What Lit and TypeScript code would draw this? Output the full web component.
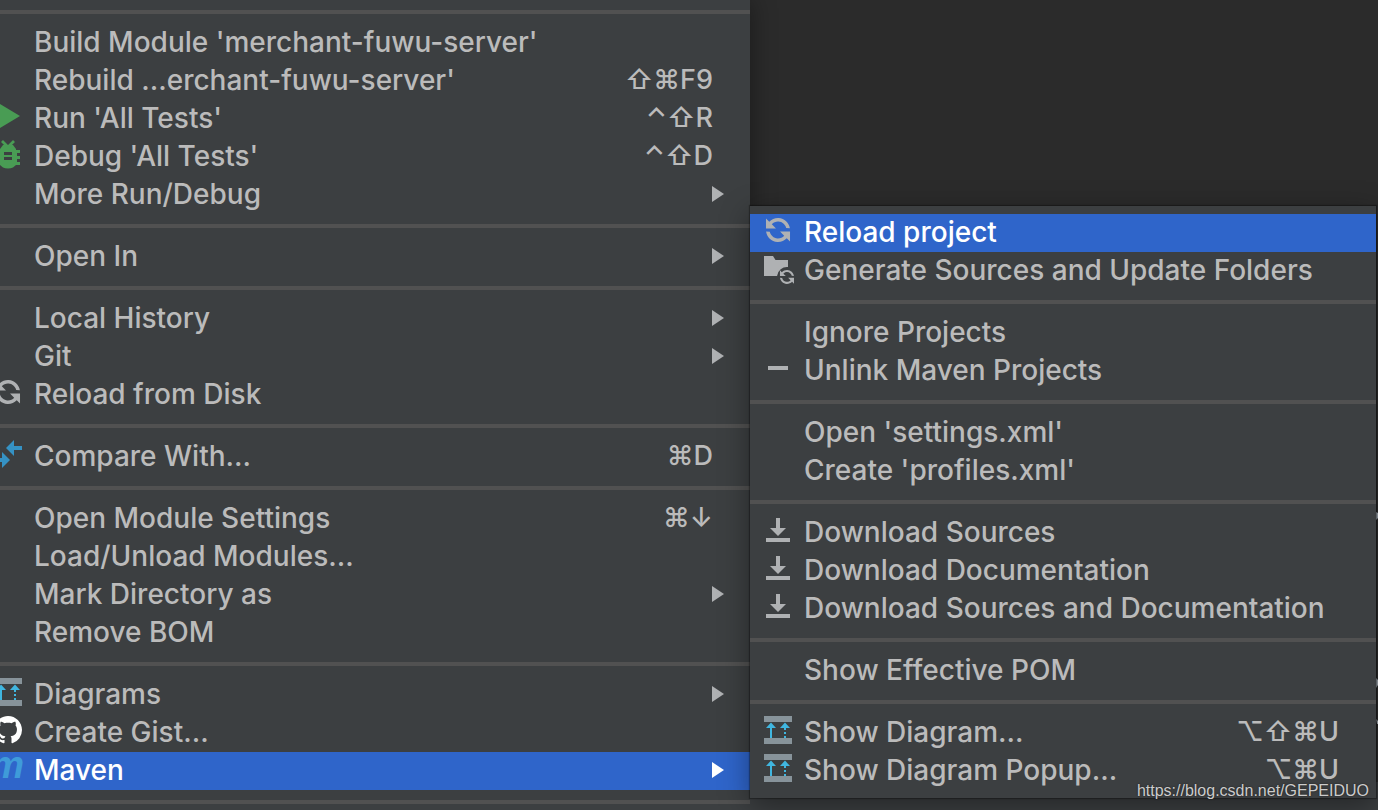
import { LitElement, html, svg, css, nothing, TemplateResult } from "lit";
import { customElement, property } from "lit/decorators.js";
import { classMap } from "lit/directives/class-map.js";

interface MenuEntry {
  label: string;
  icon?: string;
  keys?: string;
  submenu?: boolean;
  selected?: boolean;
}

const REFRESH =
  "M12.575 11.885C11.474 13.182 9.832 14.004 7.999 14.004C5.039 14.004 2.58 11.862 2.088 9.043L3.948 9.108C4.434 10.89 6.064 12.2 8 12.2C9.301 12.2 10.465 11.608 11.235 10.679L9.05 8.712L14.043 8.45L14.305 13.443ZM3.428 4.117C4.528 2.825 6.168 2.004 7.999 2.004C10.919 2.004 13.351 4.09 13.888 6.853L12.023 6.788C11.502 5.059 9.898 3.8 8 3.8C6.699 3.8 5.535 4.392 4.765 5.321L6.955 7.293L1.962 7.555L1.7 2.562Z";

const ICONS: Record<string, TemplateResult> = {
  run: svg`<path fill="#499c54" d="M8 4l20 12L8 28z" />`,
  debug: svg`
    <path stroke="#499c54" stroke-width="2.8" fill="none" d="M10 3l6 6 6-6" />
    <path fill="#499c54" fill-rule="evenodd"
      d="M11 7h10l3 4v1h4v3h-3v3h3v3h-3v3h3v3h-4l-3 2.500q-2 1-5 1t-5-1l-3-2.500H4v-3h3v-3H4v-3h3v-3H4v-3h4v-1zM12 14v3h8v-3zM12 19v3h8v-3z" />`,
  reload: svg`<path fill="#afb1b3" transform="scale(2) rotate(3 8 8)" d=${REFRESH} />`,
  folder: svg`
    <path fill="#afb1b3" d="M2 4h9l2.500 4H26v7.050A10 10 0 0 0 15.050 24H2z" />
    <path fill="#afb1b3" transform="translate(15.600 15.600) scale(1.170) rotate(3 8 8)" d=${REFRESH} />`,
  minus: svg`<path fill="#afb1b3" d="M6 14h20v4H6z" />`,
  download: svg`<path fill="#afb1b3" d="M14 4h4v10h6l-8 8-8-8h6zM4 24h24v4H4z" />`,
  compare: svg`<path fill="#3592c4" d="M14 10l8-8v6h8v4h-8v6zM18 22l-8-8v6H2v4h8v6z" />`,
  diagram: svg`
    <path fill="#87939a" d="M2 2h28v6H2zM2 24h28v6H2z" />
    <path fill="#40b6e0"
      d="M9 8.600l5 5.400h-4v10H8V14H4zM23 8.600l5 5.400H18zM22 14h2v2h-2zM22 18h2v2h-2zM22 22h2v2h-2z" />`,
  github: svg`<path fill="#fff" transform="translate(2 2) scale(1.750)"
    d="M8 0C3.580 0 0 3.580 0 8c0 3.540 2.290 6.530 5.470 7.590.4.070.55-.17.55-.38 0-.19-.01-.82-.01-1.490-2.010.37-2.530-.49-2.690-.94-.09-.23-.48-.94-.82-1.130-.28-.15-.68-.52-.01-.53.63-.01 1.080.58 1.230.82.72 1.210 1.870.87 2.330.66.07-.52.28-.87.51-1.070-1.780-.2-3.640-.89-3.640-3.950 0-.87.31-1.590.82-2.150-.08-.2-.36-1.020.08-2.120 0 0 .67-.21 2.200.82.64-.18 1.320-.27 2-.27s1.360.09 2 .27c1.530-1.040 2.200-.82 2.200-.82.44 1.100.16 1.920.08 2.120.51.56.82 1.270.82 2.150 0 3.070-1.870 3.750-3.650 3.950.29.25.54.73.54 1.480 0 1.070-.01 1.930-.01 2.200 0 .21.15.46.55.38A8.010 8.010 0 0 0 16 8c0-4.420-3.580-8-8-8z" />`,
  maven: svg`<text class="maven" x="32" y="26" text-anchor="end">m</text>`,
};

const MAIN_MENU: MenuEntry[][] = [
  [
    { label: "Build Module 'merchant-fuwu-server'" },
    { label: "Rebuild ...erchant-fuwu-server'", keys: "⇧⌘F9" },
    { label: "Run 'All Tests'", icon: "run", keys: "⌃⇧R" },
    { label: "Debug 'All Tests'", icon: "debug", keys: "⌃⇧D" },
    { label: "More Run/Debug", submenu: true },
  ],
  [{ label: "Open In", submenu: true }],
  [
    { label: "Local History", submenu: true },
    { label: "Git", submenu: true },
    { label: "Reload from Disk", icon: "reload" },
  ],
  [{ label: "Compare With...", icon: "compare", keys: "⌘D" }],
  [
    { label: "Open Module Settings", keys: "⌘↓" },
    { label: "Load/Unload Modules..." },
    { label: "Mark Directory as", submenu: true },
    { label: "Remove BOM" },
  ],
  [
    { label: "Diagrams", icon: "diagram", submenu: true },
    { label: "Create Gist...", icon: "github" },
    { label: "Maven", icon: "maven", submenu: true, selected: true },
  ],
];

const MAVEN_MENU: MenuEntry[][] = [
  [
    { label: "Reload project", icon: "reload", selected: true },
    { label: "Generate Sources and Update Folders", icon: "folder" },
  ],
  [{ label: "Ignore Projects" }, { label: "Unlink Maven Projects", icon: "minus" }],
  [{ label: "Open 'settings.xml'" }, { label: "Create 'profiles.xml'" }],
  [
    { label: "Download Sources", icon: "download" },
    { label: "Download Documentation", icon: "download" },
    { label: "Download Sources and Documentation", icon: "download" },
  ],
  [{ label: "Show Effective POM" }],
  [
    { label: "Show Diagram...", icon: "diagram", keys: "⌥⇧⌘U" },
    { label: "Show Diagram Popup...", icon: "diagram", keys: "⌥⌘U" },
  ],
];

@customElement("menu-list")
export class MenuList extends LitElement {
  @property({ attribute: false }) groups: MenuEntry[][] = [];

  static styles = css`
    :host {
      display: block;
      background: #3c3f41;
      color: #bbbbbb;
      font: 500 28px/36px Inter, "Liberation Sans", sans-serif;
    }
    .separator {
      height: 4px;
      margin: 10px 0;
      border: 0;
      background: #515151;
    }
    .item {
      display: flex;
      align-items: flex-start;
      box-sizing: border-box;
      width: 100%;
      height: 38px;
      margin: 0;
      padding: 0 26px 0 12px;
      border: 0;
      background: none;
      color: inherit;
      font: inherit;
      text-align: left;
      white-space: nowrap;
    }
    .selected {
      background: #2f65ca;
      color: #ffffff;
    }
    .icon {
      flex: none;
      width: 32px;
      height: 32px;
      margin-right: 10px;
    }
    .maven {
      fill: #3f9bd9;
      font: italic bold 38px "Liberation Sans", sans-serif;
    }
    .label {
      flex: 1;
    }
    .keys {
      margin-right: 11px;
      font-size: 27px;
    }
    .arrow {
      width: 12px;
      height: 16px;
      margin-top: 10px;
      fill: #afb1b3;
    }
    .selected .arrow {
      fill: #ffffff;
    }
  `;

  private renderItem(e: MenuEntry) {
    return html`<button
      class=${classMap({ item: true, selected: !!e.selected })}
      role="menuitem"
      aria-haspopup=${e.submenu ? "menu" : nothing}
    >
      <svg class="icon" viewBox="0 0 32 32" aria-hidden="true">${e.icon ? ICONS[e.icon] : nothing}</svg>
      <span class="label">${e.label}</span>
      ${e.keys ? html`<span class="keys">${e.keys}</span>` : nothing}
      ${e.submenu
        ? html`<svg class="arrow" viewBox="0 0 12 16" aria-hidden="true"><path d="M0 0l12 8-12 8z" /></svg>`
        : nothing}
    </button>`;
  }

  render() {
    return html`<div role="menu">
      ${this.groups.map(
        (group, i) => html`${i ? html`<hr class="separator" />` : nothing}${group.map((e) => this.renderItem(e))}`
      )}
    </div>`;
  }
}

@customElement("app-root")
export class AppRoot extends LitElement {
  static styles = css`
    :host {
      display: grid;
      grid-template-columns: 375fr 314fr;
      position: relative;
      height: 100vh;
      overflow: hidden;
      background: #2b2b2b;
    }
    .main {
      margin-left: -20px;
      background: #3c3f41;
      box-shadow: 0 0 24px rgba(0, 0, 0, 0.4);
    }
    .edge {
      height: 4px;
      margin: 10px 0;
      border: 0;
      background: #515151;
    }
    .editor {
      display: flex;
      flex-direction: column;
      position: relative;
    }
    .code {
      flex: 1;
    }
    .status {
      height: 32px;
      background: #3c3f41;
    }
    .behind {
      position: absolute;
      right: 0;
      top: 500px;
      width: 2px;
      height: 240px;
      fill: #a9b1b8;
    }
    .sub {
      position: absolute;
      top: 206px;
      left: 0;
      right: 2px;
      padding: 8px 0;
      background: #3c3f41;
      box-shadow: 0 0 1px 1px rgba(0, 0, 0, 0.3), 0 8px 28px rgba(0, 0, 0, 0.4);
    }
    .watermark {
      position: absolute;
      right: 9px;
      bottom: 9px;
      color: #cccccc;
      font: 16px/20px "Liberation Sans", Arial, sans-serif;
      text-shadow: 0 0 2px rgba(0, 0, 0, 0.6);
      text-decoration: none;
    }
  `;

  render() {
    return html`
      <nav class="main">
        <hr class="edge" />
        <menu-list .groups=${MAIN_MENU}></menu-list>
        <hr class="edge" />
      </nav>
      <main class="editor">
        <div class="code"></div>
        <div class="status"></div>
        <svg class="behind" viewBox="0 0 2 240" aria-hidden="true">
          <path d="M0 12l2 1v5l-2 2zM0 178l2 2v5l-2 3zM0 219l2 2v3h-1z" />
        </svg>
        <div class="sub"><menu-list .groups=${MAVEN_MENU}></menu-list></div>
      </main>
      <a class="watermark" href="https://blog.csdn.net/GEPEIDUO">https://blog.csdn.net/GEPEIDUO</a>
    `;
  }
}
